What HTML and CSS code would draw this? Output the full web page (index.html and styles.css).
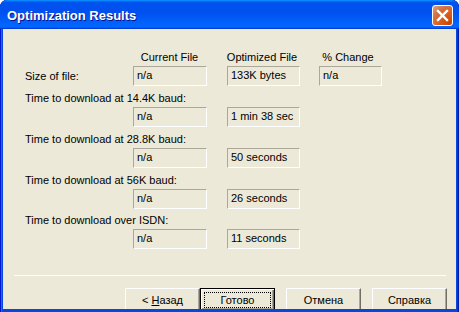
FILE: index.html
```html
<!DOCTYPE html>
<html lang="ru">
<head>
  <meta charset="UTF-8" />
  <meta name="viewport" content="width=device-width, initial-scale=1.0" />
  <title>Optimization Results</title>
  <link rel="stylesheet" href="styles.css">
</head>
<body>
  <div class="window">
    <div class="titlebar">
      <span class="title">Optimization Results</span>
      <button class="close" aria-label="Close">
        <svg width="13" height="13" viewBox="0 0 13 13">
          <path d="M2 2 L11 11 M11 2 L2 11" stroke="#fff" stroke-width="2.4" stroke-linecap="square" />
        </svg>
      </button>
    </div>

    <div class="client">
      <div class="results">
        <div class="head-row">
          <div class="col-label"></div>
          <div class="col col-cur">Current File</div>
          <div class="col col-opt">Optimized File</div>
          <div class="col col-chg">% Change</div>
        </div>

        <div class="row">
          <div class="col-label">Size of file:</div>
          <div class="field col-cur">n/a</div>
          <div class="field col-opt">133K bytes</div>
          <div class="field col-chg">n/a</div>
        </div>

        <div class="label">Time to download at 14.4K baud:</div>
        <div class="row">
          <div class="col-label"></div>
          <div class="field col-cur">n/a</div>
          <div class="field col-opt">1 min 38 sec</div>
        </div>

        <div class="label">Time to download at 28.8K baud:</div>
        <div class="row">
          <div class="col-label"></div>
          <div class="field col-cur">n/a</div>
          <div class="field col-opt">50 seconds</div>
        </div>

        <div class="label">Time to download at 56K baud:</div>
        <div class="row">
          <div class="col-label"></div>
          <div class="field col-cur">n/a</div>
          <div class="field col-opt">26 seconds</div>
        </div>

        <div class="label short">Time to download over ISDN:</div>
        <div class="row">
          <div class="col-label"></div>
          <div class="field col-cur">n/a</div>
          <div class="field col-opt">11 seconds</div>
        </div>
      </div>

      <div class="separator"></div>

      <div class="buttons">
        <button class="btn">&lt; <u>Н</u>азад</button>
        <button class="btn default"><span class="focus">Готово</span></button>
        <button class="btn gap">Отмена</button>
        <button class="btn gap">Справка</button>
      </div>
    </div>
  </div>
</body>
</html>
```

FILE: styles.css
```css
:root {
  --face: #ece9d8;
  --shadow: #aca899;
  --dark: #716f64;
  --frame: #0846dc;
}

body {
  margin: 0;
  background: #fff;
  font-family: 'Liberation Sans', Arial, sans-serif;
  font-size: 11px;
  color: #000;
}

.window {
  width: 459px;
  height: 312px;
  background: var(--frame);
  border-radius: 7px 7px 0 0;
  overflow: hidden;
  display: flex;
  flex-direction: column;
  box-shadow: inset 1px 0 #0019cf, inset -1px 0 #001ea0, inset 2px 0 #166aee, inset -2px 0 #0831d9;
}

.titlebar {
  height: 29px;
  flex: none;
  display: flex;
  align-items: center;
  justify-content: space-between;
  padding: 0 6px 0 7px;
  border-radius: 7px 7px 0 0;
  background: linear-gradient(180deg, #0997ff, #0053ee 8%, #0050ee 40%, #06f 88%, #06f 93%, #005bff 95%, #003dd7 96%, #003dd7);
}

.title {
  color: #fff;
  font-weight: bold;
  font-size: 13px;
  text-shadow: 1px 1px #0f1089;
  margin-top: 1px;
}

.close {
  width: 21px;
  height: 21px;
  padding: 0;
  margin-top: 2px;
  border: 1px solid #fff;
  border-radius: 3px;
  background: radial-gradient(circle at 90% 90%, #cc4600 0%, #dc6527 55%, #cd7546 70%, #e5a68a 100%);
  display: flex;
  align-items: center;
  justify-content: center;
}

.client {
  flex: 1;
  margin: 0 3px 3px 3px;
  background: var(--face);
  overflow: hidden;
  display: flex;
  flex-direction: column;
}

.results {
  padding: 21px 0 0 22px;
}

.head-row,
.row {
  display: flex;
  align-items: center;
}

.head-row {
  height: 13px;
  margin-bottom: 3px;
}

.col-label {
  width: 108px;
}

.col-cur {
  width: 73px;
}

.col-opt {
  width: 72px;
  margin-left: 20px;
}

.col-chg {
  width: 62px;
  margin-left: 19px;
}

.col {
  text-align: center;
}

.field {
  height: 17px;
  line-height: 14px;
  padding: 1px 0 0 3px;
  box-sizing: content-box;
  border: 1px solid;
  border-color: var(--shadow) #fff #fff var(--shadow);
  white-space: nowrap;
}

.col-cur.field { width: 69px; }
.col-opt.field { width: 68px; }
.col-chg.field { width: 58px; }

.label {
  height: 13px;
  line-height: 13px;
  margin-top: 6px;
  margin-bottom: 2px;
}

.label.short {
  margin-top: 5px;
}

.separator {
  margin: 26px 10px 0 11px;
  height: 1px;
  background: var(--shadow);
  border-bottom: 1px solid #fff;
}

.buttons {
  display: flex;
  padding: 12px 0 0 122px;
}

.btn {
  width: 75px;
  height: 23px;
  flex: none;
  padding: 0;
  font-family: inherit;
  font-size: 11px;
  color: #000;
  background: var(--face);
  border: 1px solid;
  border-color: #fff var(--dark) var(--dark) #fff;
  box-shadow: inset -1px -1px var(--shadow);
}

.btn.default {
  border: 1px solid #000;
  box-shadow: inset 1px 1px #fff, inset -1px -1px var(--dark), inset -2px -2px var(--shadow);
  display: flex;
  align-items: flex-start;
  justify-content: center;
  padding-top: 3px;
}

.focus {
  display: block;
  width: 65px;
  height: 14px;
  line-height: 14px;
  border: 1px dotted #000;
}

.btn.gap {
  margin-left: 11px;
}
```
